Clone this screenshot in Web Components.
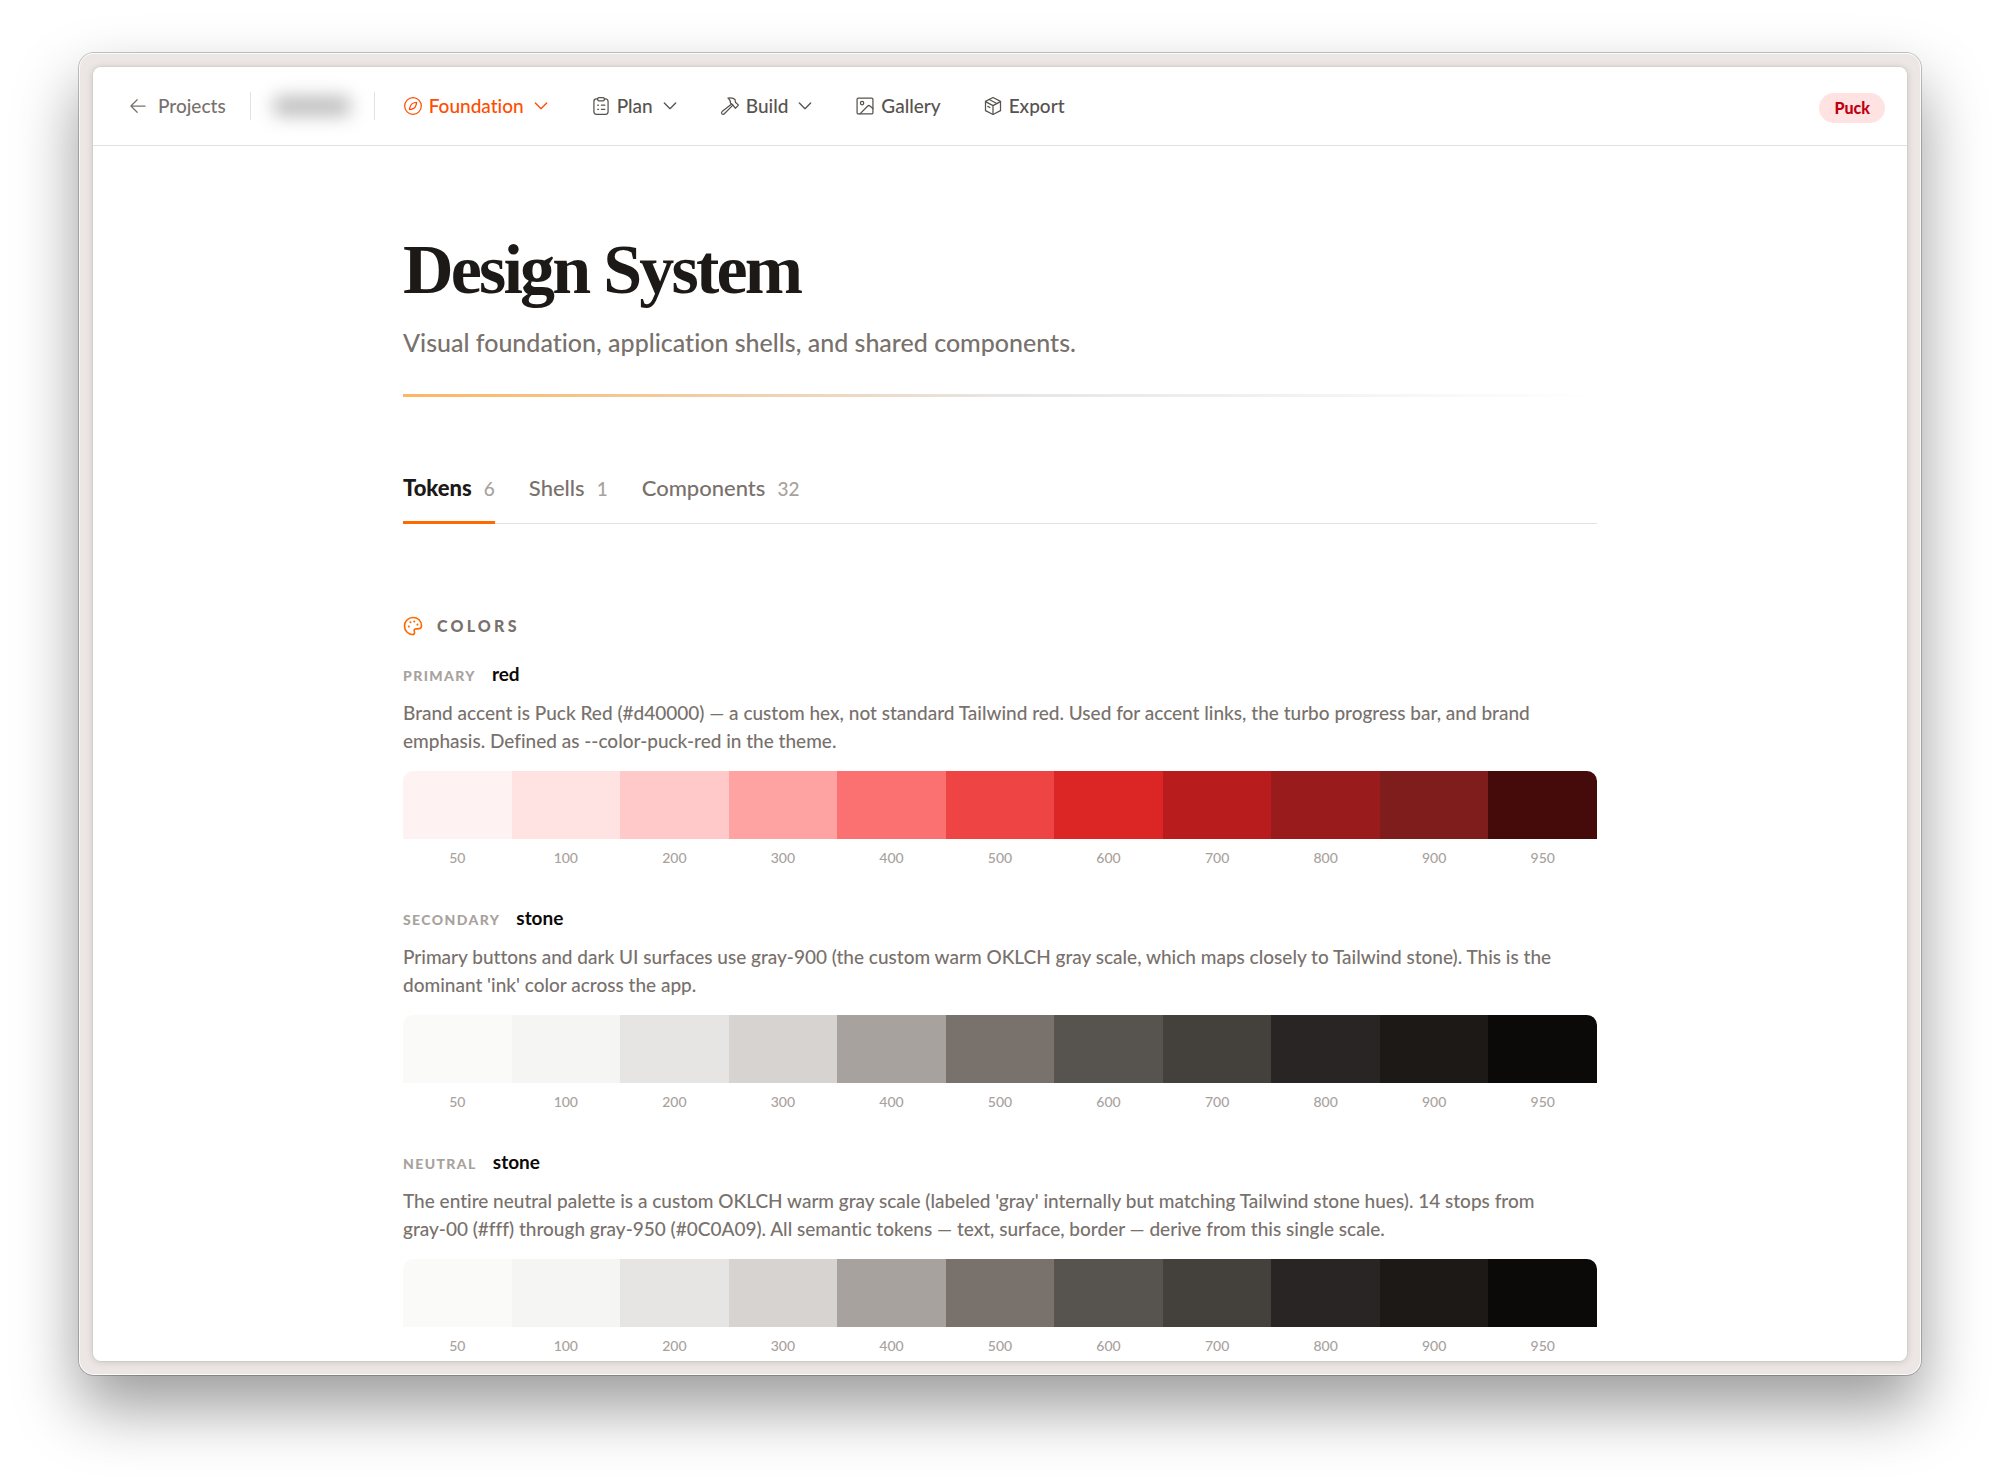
<!DOCTYPE html>
<html lang="en">
<head>
<meta charset="utf-8">
<meta name="viewport" content="width=device-width, initial-scale=1">
<title>Design System</title>
<style>
  * { box-sizing: border-box; }
  :root {
    --ink: #1c1917;
    --muted: #78716c;
    --faint: #a8a29e;
    --line: #e3e2e1;
    --accent: #ff4d00;
    --accent-soft: #ff6900;
  }
  body {
    margin: 0;
    height: 100vh;
    padding: 53px 79px 104px;
    overflow: hidden;
    background: #fff;
    color: var(--ink);
    font: 500 19px/28px Lato, "Open Sans", sans-serif;
    font-variant-ligatures: none;
  }
  .token { white-space: nowrap; }
</style>
</head>
<body>
<ds-window>
  <ds-topbar slot="bar" project-href="#projects">
    <ds-nav-item icon="compass" menu active>Foundation</ds-nav-item>
    <ds-nav-item icon="clipboard" menu>Plan</ds-nav-item>
    <ds-nav-item icon="hammer" menu>Build</ds-nav-item>
    <ds-nav-item icon="image" href="#gallery">Gallery</ds-nav-item>
    <ds-nav-item icon="box" href="#export">Export</ds-nav-item>
    <ds-badge slot="end">Puck</ds-badge>
  </ds-topbar>
  <ds-page-header>
    Design System
    <span slot="subtitle">Visual foundation, application shells, and shared components.</span>
  </ds-page-header>
  <ds-tabs></ds-tabs>
  <ds-section icon="palette" heading="Colors">
    <ds-color-scale role-name="Primary" palette="red">Brand accent is Puck Red (#d40000) — a custom hex, not standard Tailwind red. Used for accent links, the turbo progress bar, and brand emphasis. Defined as --color-puck-red in the theme.</ds-color-scale>
    <ds-color-scale role-name="Secondary" palette="stone">Primary buttons and dark UI surfaces use gray-900 (the custom warm OKLCH gray scale, which maps closely to Tailwind stone). This is the dominant 'ink' color across the app.</ds-color-scale>
    <ds-color-scale role-name="Neutral" palette="stone">The entire neutral palette is a custom OKLCH warm gray scale (labeled 'gray' internally but matching Tailwind stone hues). 14 stops from <span class="token">gray-00</span> (#fff) through <span class="token">gray-950</span> (#0C0A09). All semantic tokens — text, surface, border — derive from this single scale.</ds-color-scale>
  </ds-section>
</ds-window>

<script>
const ICONS = {
  arrow: '<path d="M20.5 12H4M11 4.5 3.5 12l7.5 7.5"/>',
  chevron: '<path stroke-width="2" d="m3.500 7.500 8.500 8.500 8.500-8.500"/>',
  compass: '<circle cx="12" cy="12" r="10"/><path d="M16.300 7.700c-.6-.5-4.800.9-5.900 2C9.300 10.800 7.200 15.500 7.800 16.200c.7.600 5-1 6.100-2.100 1.100-1.100 2.900-5.800 2.400-6.400Z"/>',
  clipboard: '<path d="M8 3.500H6.500A3 3 0 0 0 3.500 6.500V19a3 3 0 0 0 3 3h11a3 3 0 0 0 3-3V6.500a3 3 0 0 0-3-3H16"/><rect x="8" y="1.800" width="8" height="4" rx="1.500"/><path d="M8 11h1M8 16h1M12.500 11h4M12.500 16h4"/>',
  hammer: '<path d="M14 9.500 2.500 18.700a2 2 0 0 0-.2 2.700 2 2 0 0 0 2.900-.1L15.500 11"/><path d="M9.500 2.500c3.500-.8 6.500-.3 8.500 1.700l.5 3.300 3.700 3.500-3.700 3.700-2.500-3.200-3.500-3.200c.2-2.300-.8-4.300-3-5.800Z"/>',
  image: '<rect x="2.500" y="2.500" width="19" height="19" rx="1.500"/><circle cx="8.500" cy="8.500" r="2"/><path d="M6 21.500 15.300 12a2 2 0 0 1 2.600-.1l3.600 3.100"/>',
  box: '<path d="m12 1.800 9 4.600v11.200l-9 4.600-9-4.600V6.400Z"/><path d="m3 6.800 9 4.700 9-4.700M12 11.500v10.300M7.500 4.200l9 4.800M5.800 12.500l2.500 1.300"/>',
  palette: '<path stroke-width="2" d="M12 1.800C6.300 1.800 1.800 6.400 1.800 12S6.300 22.200 11.500 22.200c1.700 0 2.500-1 2.300-2.500-.2-1.600-.8-2.600-.1-3.500.7-.9 2-.7 3.800-.7 2.700 0 4.700-.8 4.700-4C22.200 5.800 17.700 1.800 12 1.800Z"/><path stroke-width="2.500" d="M7 12.500h.01M9 7.500h.01M13.500 6.500h.01M17.300 10.300h.01"/>'
};

const SCALES = {
  red: ['#fef2f2', '#ffe2e2', '#ffc9c9', '#ffa2a2', '#fb7171', '#ef4444', '#dc2626', '#b91c1c', '#991b1b', '#7f1d1d', '#450a0a'],
  stone: ['#fafaf9', '#f5f5f4', '#e7e5e4', '#d6d3d1', '#a8a29e', '#78716c', '#57534e', '#44403c', '#292524', '#1c1917', '#0c0a09']
};
const STOPS = [50, 100, 200, 300, 400, 500, 600, 700, 800, 900, 950];

class DsIcon extends HTMLElement {
  constructor() {
    super();
    this.attachShadow({ mode: 'open' });
  }

  connectedCallback() {
    this.shadowRoot.innerHTML = `
      <style>
        :host { display: inline-flex; flex: none; width: 20px; height: 20px; }
        svg { width: 100%; height: 100%; }
      </style>
      <svg viewBox="0 0 24 24" fill="none" stroke="currentColor" stroke-width="1.5"
        stroke-linecap="round" stroke-linejoin="round" aria-hidden="true">${ICONS[this.getAttribute('name')]}</svg>
    `;
  }
}

/* Outer bezel plus the white pane that clips the page. */
class DsWindow extends HTMLElement {
  constructor() {
    super();
    this.attachShadow({ mode: 'open' });
    this.shadowRoot.innerHTML = `
      <style>
        :host {
          display: block;
          box-sizing: border-box;
          height: 100%;
          padding: 14px;
          border-radius: 15px;
          background: #ece7e4;
          box-shadow:
            inset 0 0 0 1px rgba(255, 255, 255, 0.8),
            0 0 0 1px rgba(0, 0, 0, 0.22),
            0 32px 64px rgba(0, 0, 0, 0.4);
        }
        .pane {
          display: flex;
          flex-direction: column;
          height: 100%;
          overflow: hidden;
          border-radius: 8px;
          background: #fff;
        }
        .rim {
          height: 100%;
          border-radius: 8px;
          box-shadow: 0 0 2px rgba(0, 0, 0, 0.16), 0 1px 8px rgba(0, 0, 0, 0.14);
        }
        main {
          box-sizing: border-box;
          width: 100%;
          max-width: 1194px;
          margin: 0 auto;
          padding-top: 84px;
        }
      </style>
      <div class="rim">
        <div class="pane">
          <slot name="bar"></slot>
          <main><slot></slot></main>
        </div>
      </div>
    `;
  }
}

class DsTopbar extends HTMLElement {
  constructor() {
    super();
    this.attachShadow({ mode: 'open' });
  }

  connectedCallback() {
    this.shadowRoot.innerHTML = `
      <style>
        :host { display: block; flex: none; }
        header {
          display: flex;
          align-items: center;
          box-sizing: border-box;
          height: 79px;
          padding: 0 22px 0 35px;
          border-bottom: 1px solid var(--line);
        }
        a {
          display: flex;
          align-items: center;
          gap: 10px;
          color: var(--muted);
          text-decoration: none;
        }
        .rule { width: 1px; height: 28px; background: var(--line); }
        .rule.first { margin-left: 24px; }
        .project {
          display: flex;
          align-items: center;
          justify-content: center;
          width: 123px;
          height: 54px;
        }
        .project i {
          width: 78px;
          height: 20px;
          border-radius: 8px;
          background: #bcbcbc;
          filter: blur(9px);
        }
        nav { display: flex; gap: 42px; margin-left: 28px; }
        .end { margin-left: auto; padding-top: 4px; }
      </style>
      <header>
        <a href="${this.getAttribute('project-href')}"><ds-icon name="arrow"></ds-icon>Projects</a>
        <span class="rule first"></span>
        <span class="project"><i></i></span>
        <span class="rule"></span>
        <nav aria-label="Project"><slot></slot></nav>
        <div class="end"><slot name="end"></slot></div>
      </header>
    `;
  }
}

class DsNavItem extends HTMLElement {
  constructor() {
    super();
    this.attachShadow({ mode: 'open' });
  }

  connectedCallback() {
    const menu = this.hasAttribute('menu');
    const tag = menu ? 'button type="button" aria-haspopup="menu"' : `a href="${this.getAttribute('href')}"`;
    this.shadowRoot.innerHTML = `
      <style>
        :host { display: block; color: #57534e; }
        :host([active]) { color: var(--accent); }
        button, a {
          display: flex;
          align-items: center;
          gap: 6px;
          padding: 0;
          border: 0;
          background: none;
          color: inherit;
          font: inherit;
          font-variant-ligatures: inherit;
          text-decoration: none;
          cursor: pointer;
        }
        .chevron { width: 16px; height: 16px; margin-left: 3px; }
      </style>
      <${tag}>
        <ds-icon name="${this.getAttribute('icon')}"></ds-icon>
        <slot></slot>
        ${menu ? '<ds-icon class="chevron" name="chevron"></ds-icon>' : ''}
      </${menu ? 'button' : 'a'}>
    `;
  }
}

class DsBadge extends HTMLElement {
  constructor() {
    super();
    this.attachShadow({ mode: 'open' });
    this.shadowRoot.innerHTML = `
      <style>
        :host {
          display: block;
          padding: 0 15px;
          border-radius: 15px;
          background: #ffe2e2;
          color: #bf0010;
          font-size: 16px;
          font-weight: 900;
          line-height: 30px;
        }
      </style>
      <slot></slot>
    `;
  }
}

class DsPageHeader extends HTMLElement {
  constructor() {
    super();
    this.attachShadow({ mode: 'open' });
    this.shadowRoot.innerHTML = `
      <style>
        :host { display: block; }
        h1 {
          margin: 0;
          color: var(--ink);
          font: 700 70px/80px "Liberation Serif", "Times New Roman", serif;
          letter-spacing: -0.04em;
        }
        p {
          margin: 14px 0 34px;
          color: var(--muted);
          font-size: 25px;
          line-height: 36px;
        }
        .rule {
          height: 3px;
          background: linear-gradient(to right, #fdb562, #e7e5e4 50%, transparent);
        }
      </style>
      <h1><slot></slot></h1>
      <p><slot name="subtitle"></slot></p>
      <div class="rule"></div>
    `;
  }
}

class DsTabs extends HTMLElement {
  constructor() {
    super();
    this.attachShadow({ mode: 'open' });
    this.tabs = [['Tokens', 6], ['Shells', 1], ['Components', 32]];
    this.selected = 0;
  }

  connectedCallback() {
    this.render();
    this.shadowRoot.addEventListener('click', (e) => {
      const tab = e.target.closest('button');
      if (!tab) return;
      this.selected = Number(tab.dataset.index);
      this.render();
    });
  }

  render() {
    this.shadowRoot.innerHTML = `
      <style>
        :host { display: block; margin-top: 75px; }
        .tabs { display: flex; gap: 34px; box-shadow: inset 0 -1px var(--line); }
        button {
          display: flex;
          align-items: baseline;
          gap: 12px;
          padding: 0 0 16px;
          border: 0;
          border-bottom: 3px solid transparent;
          background: none;
          color: var(--muted);
          font: inherit;
          font-size: 22px;
          line-height: 32px;
          cursor: pointer;
        }
        button[aria-selected="true"] {
          border-color: var(--accent-soft);
          color: var(--ink);
          font-weight: 900;
        }
        .count { color: var(--faint); font-size: 19px; font-weight: 500; }
      </style>
      <div class="tabs" role="tablist">
        ${this.tabs.map(([name, count], i) => `
          <button type="button" role="tab" data-index="${i}" aria-selected="${i === this.selected}">
            <span>${name}</span><span class="count">${count}</span>
          </button>`).join('')}
      </div>
    `;
  }
}

class DsSection extends HTMLElement {
  constructor() {
    super();
    this.attachShadow({ mode: 'open' });
  }

  connectedCallback() {
    this.shadowRoot.innerHTML = `
      <style>
        :host { display: block; margin-top: 88px; }
        h2 {
          display: flex;
          align-items: center;
          gap: 14px;
          margin: 0 0 20px;
          color: var(--muted);
          font-size: 16px;
          font-weight: 900;
          line-height: 28px;
          letter-spacing: 0.2em;
          text-transform: uppercase;
        }
        ds-icon { color: var(--accent-soft); }
        .body { display: grid; gap: 36px; }
      </style>
      <h2><ds-icon name="${this.getAttribute('icon')}"></ds-icon>${this.getAttribute('heading')}</h2>
      <div class="body"><slot></slot></div>
    `;
  }
}

class DsColorScale extends HTMLElement {
  constructor() {
    super();
    this.attachShadow({ mode: 'open' });
  }

  connectedCallback() {
    const palette = this.getAttribute('palette');
    this.shadowRoot.innerHTML = `
      <style>
        :host { display: block; }
        .head { display: flex; align-items: baseline; gap: 16px; }
        .role {
          color: var(--faint);
          font-size: 14px;
          font-weight: 900;
          line-height: 20px;
          letter-spacing: 0.1em;
          text-transform: uppercase;
        }
        h3 { margin: 0; color: #0c0a09; font-size: 19px; font-weight: 700; }
        p { margin: 11px 0 16px; color: var(--muted); }
        ol { display: flex; margin: 0; padding: 0; list-style: none; }
        li { flex: 1; text-align: center; }
        li i { display: block; height: 68px; }
        li:first-child i { border-top-left-radius: 10px; }
        li:last-child i { border-top-right-radius: 10px; }
        li span {
          display: block;
          margin-top: 9px;
          color: var(--faint);
          font-size: 14px;
          line-height: 20px;
        }
      </style>
      <div class="head"><span class="role">${this.getAttribute('role-name')}</span><h3>${palette}</h3></div>
      <p><slot></slot></p>
      <ol>
        ${SCALES[palette].map((hex, i) => `<li><i style="background:${hex}"></i><span>${STOPS[i]}</span></li>`).join('')}
      </ol>
    `;
  }
}

customElements.define('ds-icon', DsIcon);
customElements.define('ds-window', DsWindow);
customElements.define('ds-topbar', DsTopbar);
customElements.define('ds-nav-item', DsNavItem);
customElements.define('ds-badge', DsBadge);
customElements.define('ds-page-header', DsPageHeader);
customElements.define('ds-tabs', DsTabs);
customElements.define('ds-section', DsSection);
customElements.define('ds-color-scale', DsColorScale);
</script>
</body>
</html>
